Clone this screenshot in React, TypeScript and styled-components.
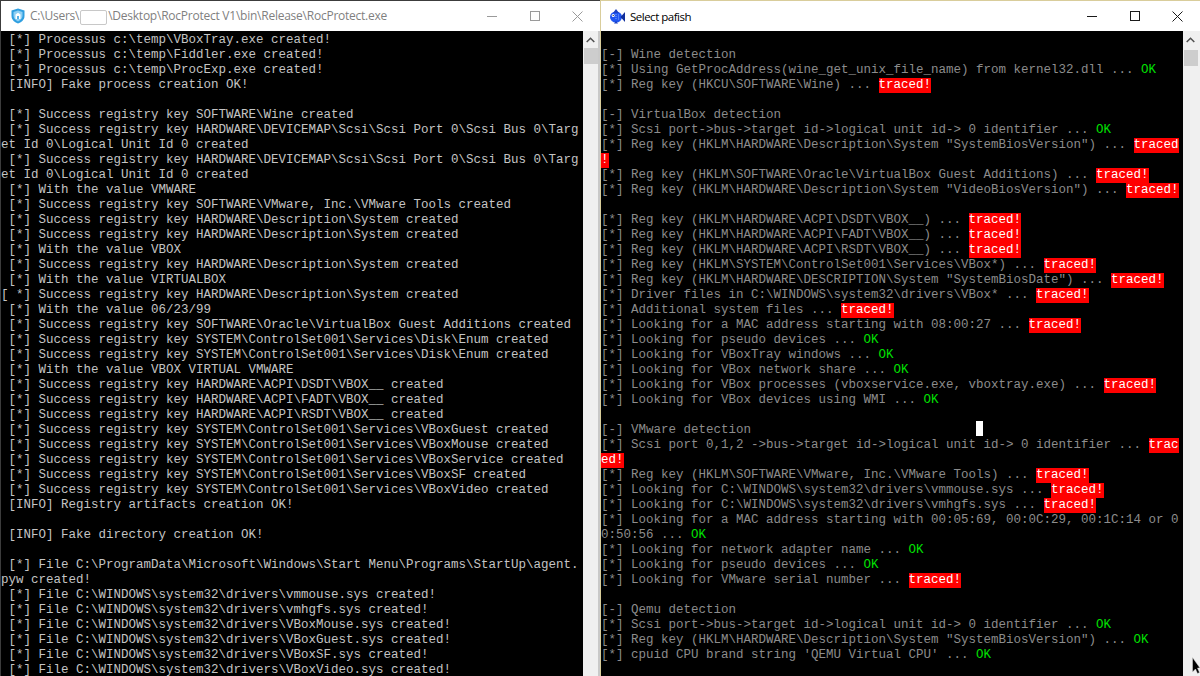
import React from "react";
import styled, { createGlobalStyle } from "styled-components";

const GlobalStyle = createGlobalStyle`
  html, body {
    margin: 0;
    padding: 0;
    height: 676px;
    overflow: hidden;
    background: #000;
  }
`;

const Desktop = styled.div`
  display: flex;
  width: 1200px;
  height: 676px;
  overflow: hidden;
`;

const Window = styled.div<{ $active?: boolean }>`
  display: flex;
  flex-direction: column;
  box-sizing: border-box;
  width: 600px;
  height: 676px;
  border-top: 1px solid ${(p) => (p.$active ? "#d9cd9b" : "#3c3c3c")};
  border-left: 1px solid ${(p) => (p.$active ? "#d9cd9b" : "#3c3c3c")};
`;

const TitleBar = styled.div`
  display: flex;
  align-items: center;
  flex: 0 0 30px;
  background: #fff;
`;

const TitleIcon = styled.span<{ $inset: number }>`
  display: flex;
  margin: 0 5px 0 ${(p) => p.$inset}px;
`;

const TitleText = styled.span<{ $active?: boolean }>`
  flex: 1;
  font: ${(p) => (p.$active ? "11.5px" : "12px")} "Open Sans", "Liberation Sans", sans-serif;
  letter-spacing: ${(p) => (p.$active ? "-0.5px" : "-0.24px")};
  color: ${(p) => (p.$active ? "#000" : "#7f7f7f")};
  white-space: nowrap;
`;

const Redacted = styled.span`
  display: inline-block;
  box-sizing: border-box;
  width: 27px;
  height: 15px;
  margin: 0 1px;
  vertical-align: middle;
  background: #fff;
  border: 1px solid #c8c8c8;
  border-radius: 2px;
`;

const Controls = styled.div`
  display: flex;
  margin-right: 1px;
`;

const ControlButton = styled.span<{ $active?: boolean }>`
  display: flex;
  align-items: center;
  justify-content: center;
  width: 43px;
  height: 30px;
  color: ${(p) => (p.$active ? "#1a1a1a" : "#9a9a9a")};
`;

const Body = styled.div`
  display: flex;
  flex: 1;
  min-height: 0;
`;

const Console = styled.div<{ $dim?: boolean }>`
  flex: 1;
  min-width: 0;
  box-sizing: border-box;
  padding-top: 2px;
  background: #000;
  color: ${(p) => (p.$dim ? "#8c8c8c" : "#c4c4c4")};
  font: 12.5px/15px "Liberation Mono", "DejaVu Sans Mono", monospace;
  overflow: hidden;
  position: relative;
`;

const Line = styled.div`
  width: 580px;
  min-height: 15px;
  white-space: pre-wrap;
  word-break: break-all;
`;

const Ok = styled.span`
  color: #00e000;
`;

const Traced = styled.span`
  padding-bottom: 1px;
  background: #ff0000;
  color: #fff;
`;

const Caret = styled.span`
  position: absolute;
  left: 375px;
  top: 390px;
  width: 7px;
  height: 15px;
  background: #fff;
`;

const Scrollbar = styled.div<{ $edge?: boolean }>`
  flex: 0 0 17px;
  box-sizing: border-box;
  background: #f0f0f0;
  border-right: ${(p) => (p.$edge ? "2px solid #c9c9c9" : "none")};
  display: flex;
  flex-direction: column;
`;

const ScrollArrow = styled.span`
  display: flex;
  align-items: center;
  justify-content: center;
  width: 15px;
  height: 17px;
  color: #505050;
`;

const ScrollThumb = styled.span<{ $gap: number }>`
  display: block;
  width: 14px;
  height: 16px;
  margin: ${(p) => p.$gap}px 0 0 1px;
  background: #cdcdcd;
`;

const Pointer = styled.svg`
  position: absolute;
  right: 0;
  bottom: 2px;
`;

const ShieldIcon = () => (
  <svg width="14" height="16" viewBox="0 0 14 16">
    <path d="M7 0.5 L13.5 2.5 V8 C13.5 12 10 14.5 7 15.5 C4 14.5 0.5 12 0.5 8 V2.5 Z" fill="#2f9fe0" />
    <path d="M7 2.5 L11.5 4 V8 C11.5 10.5 9 12.5 7 13.5 C5 12.5 2.5 10.5 2.5 8 V4 Z" fill="#8fd0f4" />
    <path d="M4.5 6.5 L7 4.8 L9.5 6.5 V11 H4.5 Z" fill="#fff" />
    <rect x="6.2" y="8" width="1.6" height="3" fill="#2f9fe0" />
  </svg>
);

const FishIcon = () => (
  <svg width="15" height="15" viewBox="0 0 15 15">
    <ellipse cx="6" cy="8" rx="6" ry="5.5" fill="#1f55f0" />
    <path d="M10.5 8 L15 3 V13 Z" fill="#12309c" />
    <path d="M3 4 L6 0 L9 4 Z" fill="#1a3fc0" />
    <path d="M4 14.5 L6 12 L8 14.5 Z" fill="#1a3fc0" />
    <circle cx="3.2" cy="6.5" r="1.5" fill="#fff" />
    <circle cx="3.2" cy="6.5" r="0.6" fill="#000" />
    <path d="M6 5 V11 M8.5 5.5 V10.5" stroke="#7fa8ff" strokeWidth="1" strokeDasharray="1 1" />
  </svg>
);

const WindowControls = ({ active }: { active?: boolean }) => (
  <Controls>
    <ControlButton $active={active}>
      <svg width="10" height="10" viewBox="0 0 10 10">
        <path d="M0 5.5 H10" stroke="currentColor" fill="none" />
      </svg>
    </ControlButton>
    <ControlButton $active={active}>
      <svg width="10" height="10" viewBox="0 0 10 10">
        <rect x="0.5" y="0.5" width="9" height="9" stroke="currentColor" fill="none" />
      </svg>
    </ControlButton>
    <ControlButton $active={active}>
      <svg width="11" height="11" viewBox="0 0 11 11">
        <path d="M0.5 0.5 L10.5 10.5 M10.5 0.5 L0.5 10.5" stroke="currentColor" fill="none" />
      </svg>
    </ControlButton>
  </Controls>
);

const ScrollUp = () => (
  <ScrollArrow>
    <svg width="9" height="6" viewBox="0 0 9 6">
      <path d="M0.7 5 L4.5 1.2 L8.3 5" stroke="currentColor" strokeWidth="1.5" fill="none" />
    </svg>
  </ScrollArrow>
);

const leftLines = [
  " [*] Processus c:\\temp\\VBoxTray.exe created!",
  " [*] Processus c:\\temp\\Fiddler.exe created!",
  " [*] Processus c:\\temp\\ProcExp.exe created!",
  " [INFO] Fake process creation OK!",
  "",
  " [*] Success registry key SOFTWARE\\Wine created",
  " [*] Success registry key HARDWARE\\DEVICEMAP\\Scsi\\Scsi Port 0\\Scsi Bus 0\\Target Id 0\\Logical Unit Id 0 created",
  " [*] Success registry key HARDWARE\\DEVICEMAP\\Scsi\\Scsi Port 0\\Scsi Bus 0\\Target Id 0\\Logical Unit Id 0 created",
  " [*] With the value VMWARE",
  " [*] Success registry key SOFTWARE\\VMware, Inc.\\VMware Tools created",
  " [*] Success registry key HARDWARE\\Description\\System created",
  " [*] Success registry key HARDWARE\\Description\\System created",
  " [*] With the value VBOX",
  " [*] Success registry key HARDWARE\\Description\\System created",
  " [*] With the value VIRTUALBOX",
  "[ *] Success registry key HARDWARE\\Description\\System created",
  " [*] With the value 06/23/99",
  " [*] Success registry key SOFTWARE\\Oracle\\VirtualBox Guest Additions created",
  " [*] Success registry key SYSTEM\\ControlSet001\\Services\\Disk\\Enum created",
  " [*] Success registry key SYSTEM\\ControlSet001\\Services\\Disk\\Enum created",
  " [*] With the value VBOX VIRTUAL VMWARE",
  " [*] Success registry key HARDWARE\\ACPI\\DSDT\\VBOX__ created",
  " [*] Success registry key HARDWARE\\ACPI\\FADT\\VBOX__ created",
  " [*] Success registry key HARDWARE\\ACPI\\RSDT\\VBOX__ created",
  " [*] Success registry key SYSTEM\\ControlSet001\\Services\\VBoxGuest created",
  " [*] Success registry key SYSTEM\\ControlSet001\\Services\\VBoxMouse created",
  " [*] Success registry key SYSTEM\\ControlSet001\\Services\\VBoxService created",
  " [*] Success registry key SYSTEM\\ControlSet001\\Services\\VBoxSF created",
  " [*] Success registry key SYSTEM\\ControlSet001\\Services\\VBoxVideo created",
  " [INFO] Registry artifacts creation OK!",
  "",
  " [INFO] Fake directory creation OK!",
  "",
  " [*] File C:\\ProgramData\\Microsoft\\Windows\\Start Menu\\Programs\\StartUp\\agent.pyw created!",
  " [*] File C:\\WINDOWS\\system32\\drivers\\vmmouse.sys created!",
  " [*] File C:\\WINDOWS\\system32\\drivers\\vmhgfs.sys created!",
  " [*] File C:\\WINDOWS\\system32\\drivers\\VBoxMouse.sys created!",
  " [*] File C:\\WINDOWS\\system32\\drivers\\VBoxGuest.sys created!",
  " [*] File C:\\WINDOWS\\system32\\drivers\\VBoxSF.sys created!",
  " [*] File C:\\WINDOWS\\system32\\drivers\\VBoxVideo.sys created!",
];

type Status = "ok" | "traced";
// text, result, and the label when the console broke the result over two rows
type Check = [string, Status?, string?];

const rightLines: Check[] = [
  [""],
  ["[-] Wine detection"],
  ["[*] Using GetProcAddress(wine_get_unix_file_name) from kernel32.dll ... ", "ok"],
  ["[*] Reg key (HKCU\\SOFTWARE\\Wine) ... ", "traced"],
  [""],
  ["[-] VirtualBox detection"],
  ["[*] Scsi port->bus->target id->logical unit id-> 0 identifier ... ", "ok"],
  ["[*] Reg key (HKLM\\HARDWARE\\Description\\System \"SystemBiosVersion\") ... ", "traced", "traced"],
  ["", "traced", "!"],
  ["[*] Reg key (HKLM\\SOFTWARE\\Oracle\\VirtualBox Guest Additions) ... ", "traced"],
  ["[*] Reg key (HKLM\\HARDWARE\\Description\\System \"VideoBiosVersion\") ... ", "traced"],
  [""],
  ["[*] Reg key (HKLM\\HARDWARE\\ACPI\\DSDT\\VBOX__) ... ", "traced"],
  ["[*] Reg key (HKLM\\HARDWARE\\ACPI\\FADT\\VBOX__) ... ", "traced"],
  ["[*] Reg key (HKLM\\HARDWARE\\ACPI\\RSDT\\VBOX__) ... ", "traced"],
  ["[*] Reg key (HKLM\\SYSTEM\\ControlSet001\\Services\\VBox*) ... ", "traced"],
  ["[*] Reg key (HKLM\\HARDWARE\\DESCRIPTION\\System \"SystemBiosDate\") ... ", "traced"],
  ["[*] Driver files in C:\\WINDOWS\\system32\\drivers\\VBox* ... ", "traced"],
  ["[*] Additional system files ... ", "traced"],
  ["[*] Looking for a MAC address starting with 08:00:27 ... ", "traced"],
  ["[*] Looking for pseudo devices ... ", "ok"],
  ["[*] Looking for VBoxTray windows ... ", "ok"],
  ["[*] Looking for VBox network share ... ", "ok"],
  ["[*] Looking for VBox processes (vboxservice.exe, vboxtray.exe) ... ", "traced"],
  ["[*] Looking for VBox devices using WMI ... ", "ok"],
  [""],
  ["[-] VMware detection"],
  ["[*] Scsi port 0,1,2 ->bus->target id->logical unit id-> 0 identifier ... ", "traced", "trac"],
  ["", "traced", "ed!"],
  ["[*] Reg key (HKLM\\SOFTWARE\\VMware, Inc.\\VMware Tools) ... ", "traced"],
  ["[*] Looking for C:\\WINDOWS\\system32\\drivers\\vmmouse.sys ... ", "traced"],
  ["[*] Looking for C:\\WINDOWS\\system32\\drivers\\vmhgfs.sys ... ", "traced"],
  ["[*] Looking for a MAC address starting with 00:05:69, 00:0C:29, 00:1C:14 or 0"],
  ["0:50:56 ... ", "ok"],
  ["[*] Looking for network adapter name ... ", "ok"],
  ["[*] Looking for pseudo devices ... ", "ok"],
  ["[*] Looking for VMware serial number ... ", "traced"],
  [""],
  ["[-] Qemu detection"],
  ["[*] Scsi port->bus->target id->logical unit id-> 0 identifier ... ", "ok"],
  ["[*] Reg key (HKLM\\HARDWARE\\Description\\System \"SystemBiosVersion\") ... ", "ok"],
  ["[*] cpuid CPU brand string 'QEMU Virtual CPU' ... ", "ok"],
];

export default function App() {
  return (
    <Desktop>
      <GlobalStyle />
      <Window>
        <TitleBar>
          <TitleIcon $inset={10}>
            <ShieldIcon />
          </TitleIcon>
          <TitleText>
            C:\Users\
            <Redacted />
            \Desktop\RocProtect V1\bin\Release\RocProtect.exe
          </TitleText>
          <WindowControls />
        </TitleBar>
        <Body>
          <Console>
            {leftLines.map((text, i) => (
              <Line key={i}>{text}</Line>
            ))}
          </Console>
          <Scrollbar $edge>
            <ScrollUp />
            <ScrollThumb $gap={0} />
          </Scrollbar>
        </Body>
      </Window>
      <Window $active>
        <TitleBar>
          <TitleIcon $inset={9}>
            <FishIcon />
          </TitleIcon>
          <TitleText $active>Select pafish</TitleText>
          <WindowControls active />
        </TitleBar>
        <Body>
          <Console $dim>
            {rightLines.map(([text, status, label], i) => (
              <Line key={i}>
                {text}
                {status === "ok" && <Ok>OK</Ok>}
                {status === "traced" && <Traced>{label ?? "traced!"}</Traced>}
              </Line>
            ))}
            <Caret />
          </Console>
          <Scrollbar>
            <ScrollUp />
            <ScrollThumb $gap={2} />
            <Pointer width="8" height="17" viewBox="0 0 8 17">
              <path d="M0.5 0.5 V15 L3.5 12 L5.5 16.5 L7.5 15.5 L5.5 11 H8 Z" fill="#000" stroke="#ddd" strokeWidth="0.5" />
            </Pointer>
          </Scrollbar>
        </Body>
      </Window>
    </Desktop>
  );
}
